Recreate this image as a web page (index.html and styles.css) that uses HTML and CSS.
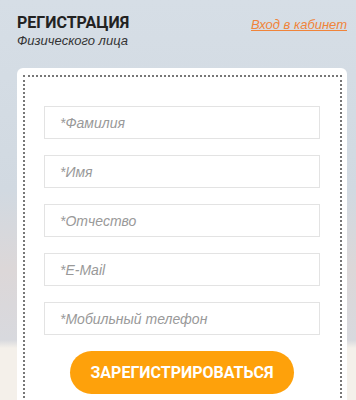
FILE: index.html
```html
<!DOCTYPE html>
<html lang="ru">
<head>
    <meta charset="UTF-8">
    <meta name="viewport" content="width=device-width, initial-scale=1.0">
    <title>Регистрация</title>
    <link rel="stylesheet" href="styles.css">
</head>
<body>

<div class="page">
    <header>
        <div class="title-block">
            <h1>Регистрация</h1>
            <div class="subtitle">Физического лица</div>
        </div>
        <a href="#" class="login-link">Вход в кабинет</a>
    </header>

    <div class="card">
        <form class="form-box" onsubmit="return false;">
            <input type="text" class="field" placeholder="*Фамилия">
            <input type="text" class="field" placeholder="*Имя">
            <input type="text" class="field" placeholder="*Отчество">
            <input type="text" class="field" placeholder="*E-Mail">
            <input type="text" class="field" placeholder="*Мобильный телефон">
            <button type="submit" class="submit-button">Зарегистрироваться</button>
        </form>
    </div>
</div>

</body>
</html>
```

FILE: styles.css
```css
html, body {
    margin: 0;
    padding: 0;
    height: 100%;
}
body {
    font-family: "Liberation Sans", Arial, sans-serif;
    overflow: hidden;
    background: linear-gradient(to bottom, #d6dee6 0, #d1d9e1 190px, #dcd7d8 270px, #d8d9de 340px, #f4f0ea 348px, #f4f0ea 100%);
}
.page {
    padding: 14px 9px 0 17px;
}
header {
    display: flex;
    justify-content: space-between;
    align-items: flex-start;
}
h1 {
    margin: 0;
    font-family: Roboto, sans-serif;
    font-size: 16px;
    line-height: 18px;
    font-weight: bold;
    text-transform: uppercase;
    color: #222;
}
.subtitle {
    margin-top: 1px;
    font-size: 13px;
    line-height: 16px;
    font-style: italic;
    color: #333;
}
.login-link {
    margin-top: 3px;
    font-size: 13px;
    line-height: 16px;
    font-style: italic;
    color: #f0843a;
    text-decoration: underline;
}
.card {
    margin-top: 19px;
    background-color: #fff;
    border-radius: 6px;
    padding: 7px 5px 0 6px;
}
.form-box {
    display: flex;
    flex-direction: column;
    align-items: center;
    border: 2px dotted #777;
    border-bottom: none;
    padding: 29px 20px 20px 19px;
}
.field {
    box-sizing: border-box;
    width: 276px;
    height: 33px;
    margin: 0 0 16px 0;
    padding: 0 15px;
    border: 1px solid #e3e3e3;
    background: #fff;
    font-family: "Liberation Sans", Arial, sans-serif;
    font-size: 14px;
    font-style: italic;
    color: #555;
    outline: none;
}
.field::placeholder {
    color: #999;
}
.submit-button {
    width: 224px;
    height: 43px;
    border: none;
    border-radius: 22px;
    background-color: #fea10b;
    color: #fff;
    font-family: Roboto, sans-serif;
    font-size: 16px;
    font-weight: bold;
    text-transform: uppercase;
    cursor: pointer;
}
```
